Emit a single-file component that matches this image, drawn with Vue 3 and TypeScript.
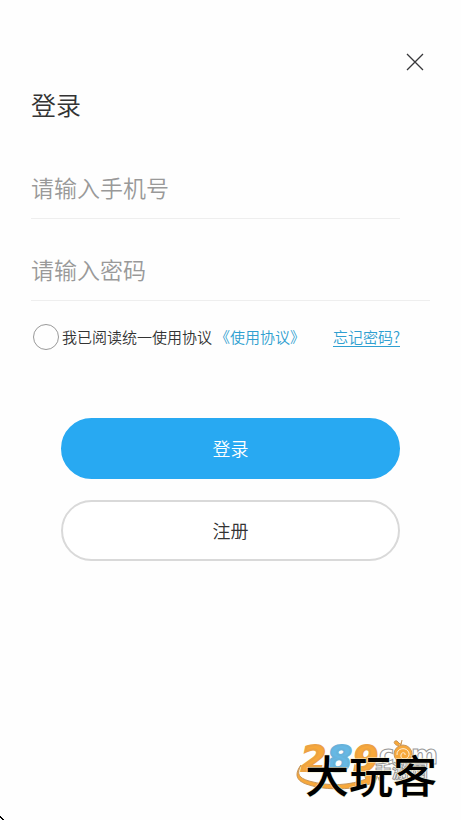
<script setup lang="ts">
import { ref } from 'vue'

const phone = ref('')
const password = ref('')
const agreed = ref(false)
</script>

<template>
  <main class="page">
    <header class="top">
      <button class="close" type="button" aria-label="关闭">
        <svg width="18" height="18" viewBox="0 0 18 18" fill="none" stroke="#37373a" stroke-width="1.3">
          <path d="M1 1L17 17M17 1L1 17" />
        </svg>
      </button>
    </header>

    <h1 class="title">登录</h1>

    <form class="form" @submit.prevent>
      <input v-model="phone" class="field field-phone" type="tel" placeholder="请输入手机号" aria-label="手机号" />
      <input v-model="password" class="field" type="password" placeholder="请输入密码" aria-label="密码" />

      <div class="terms">
        <input id="agree" v-model="agreed" class="check" type="checkbox" />
        <label class="terms-text" for="agree">我已阅读统一使用协议</label>
        <a class="terms-text agreement" href="#agreement">《使用协议》</a>
        <a class="terms-text forgot" href="#forgot">忘记密码?</a>
      </div>

      <div class="actions">
        <button class="btn primary" type="submit">登录</button>
        <button class="btn" type="button">注册</button>
      </div>
    </form>

    <svg class="mark" width="151" height="66" viewBox="0 0 151 66" aria-hidden="true">
      <path class="swoosh" d="M7 27C2 36 5 40 15 43C36 49 57 47 72 41L70 37L84 36L79 50L76 46C55 53 28 52 12 46C1 42 1 35 7 27Z" />
      <g class="digits">
        <text x="7" y="33">2</text>
        <text class="blue" x="33" y="33">8</text>
        <text x="59" y="33">9</text>
      </g>
      <text class="com" x="85" y="26">c</text>
      <text class="com" x="117" y="26">m</text>
      <g class="snail">
        <path d="M105 8C99 7 99 2 103 3L107 7L108 2" />
        <circle cx="109" cy="16" r="9" />
        <path class="spiral" d="M103 17C102 10 113 8 115 15C116 22 106 23 107 17C107 14 112 14 111 17" />
      </g>
      <text class="small" x="80" y="40">手游网</text>
      <text class="brand" x="11" y="55">大玩客</text>
    </svg>

    <svg class="corner" width="4" height="4" viewBox="0 0 4 4" aria-hidden="true">
      <path d="M0 0H1V1H2V2H3V3H4V4H2V3H1V2H0Z" fill="#000" />
    </svg>
  </main>
</template>

<style>
body {
  margin: 0;
  background: #fefefe;
}
</style>

<style scoped>
.page {
  position: relative;
  box-sizing: border-box;
  min-height: 100vh;
  padding: 46px 31px 0;
  overflow: hidden;
  color: #333;
  font-family: "Noto Sans CJK SC", sans-serif;
  font-weight: 350;
}

.top {
  display: flex;
  justify-content: flex-end;
}

.close {
  display: flex;
  align-items: center;
  justify-content: center;
  width: 30px;
  height: 32px;
  padding: 0;
  border: 0;
  background: none;
}

.title {
  margin: 8px 0 0;
  font-size: 25px;
  font-weight: inherit;
  line-height: 36px;
}

.form {
  display: flex;
  flex-direction: column;
  padding-top: 37px;
}

.field {
  box-sizing: border-box;
  width: 100%;
  height: 60px;
  margin: 0 0 22px;
  padding: 0 0 3px;
  border: 0;
  border-bottom: 1px solid #eee;
  border-radius: 0;
  outline: 0;
  background: none;
  color: #333;
  font-family: inherit;
  font-size: 23px;
  font-weight: inherit;
}

.field-phone {
  width: calc(100% - 30px);
}

.field::placeholder {
  color: #999;
  opacity: 1;
}

.terms {
  display: flex;
  align-items: center;
  height: 28px;
  padding-right: 30px;
  font-size: 15px;
  white-space: nowrap;
}

.terms-text {
  padding-bottom: 2px;
}

.check {
  flex: none;
  box-sizing: border-box;
  width: 26px;
  height: 26px;
  margin: 0 3px 0 2px;
  border: 1px solid #999;
  border-radius: 50%;
  appearance: none;
}

.check:checked {
  background: #28a9f2;
}

.agreement {
  margin-left: 3px;
  color: #2f9fd0;
  text-decoration: none;
}

.forgot {
  margin-left: auto;
  color: #2f9fd0;
  text-underline-offset: 3px;
}

.actions {
  display: flex;
  flex-direction: column;
  gap: 21px;
  padding: 67px 30px 0;
}

.btn {
  box-sizing: border-box;
  height: 61px;
  padding: 0 0 2px;
  border: 2px solid #d9d9d9;
  border-radius: 31px;
  background: #fff;
  color: #333;
  font-family: inherit;
  font-size: 18px;
  font-weight: inherit;
}

.primary {
  border-color: #28a9f2;
  background: #28a9f2;
  color: #fff;
}

.mark {
  position: absolute;
  right: 16px;
  bottom: 16px;
}

.digits {
  fill: #f7a83b;
  stroke: #eca243;
  stroke-width: 2px;
  font: italic 700 36px "DejaVu Sans", sans-serif;
}

.blue {
  fill: #66b8e4;
  stroke: #68b2da;
}

.com {
  fill: #fff;
  stroke: #999;
  stroke-width: 1px;
  font: 700 26px "DejaVu Sans", sans-serif;
}

.swoosh {
  fill: #f7a83b;
  stroke: #c8965a;
}

.snail {
  fill: #f7a83b;
  stroke: #c8965a;
}

.spiral {
  fill: none;
  stroke: #fff0d8;
}

.small {
  fill: #fff;
  stroke: #999;
  stroke-width: 1px;
  font: 700 18px "Noto Sans CJK SC", sans-serif;
}

.brand {
  fill: #000;
  stroke: #f3eccb;
  stroke-width: 1px;
  paint-order: stroke;
  font: 500 44px "Noto Sans CJK SC", sans-serif;
}

.corner {
  position: absolute;
  bottom: 0;
  left: 0;
}
</style>
